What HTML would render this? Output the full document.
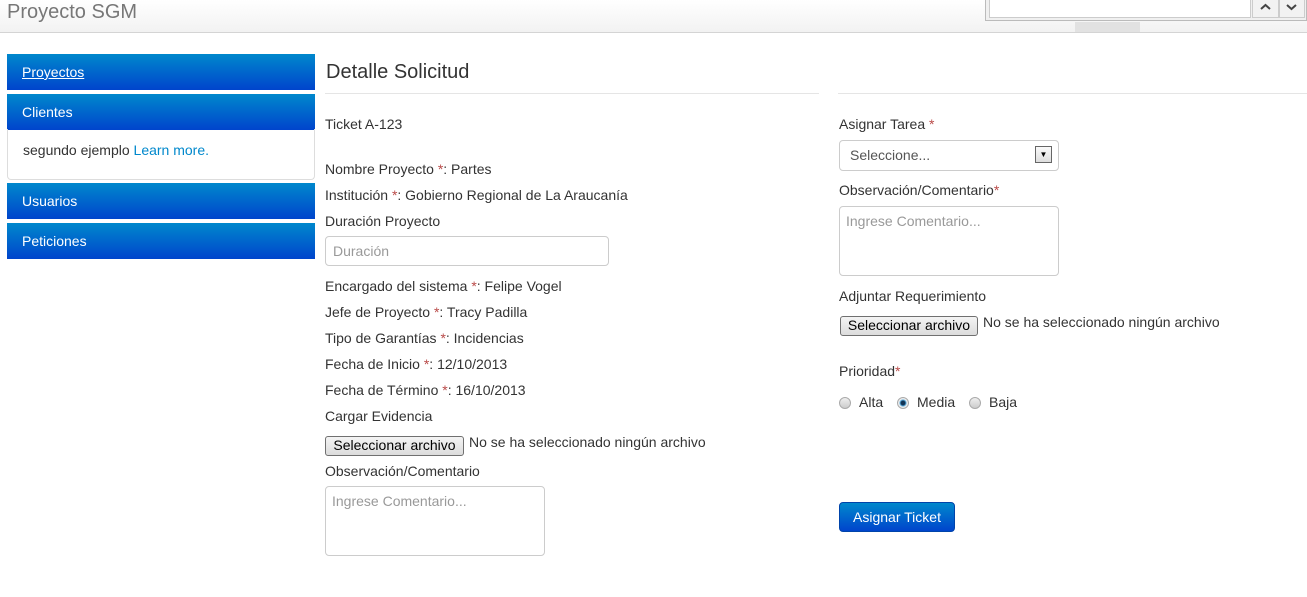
<!DOCTYPE html>
<html><head><meta charset="utf-8"><style>
*{box-sizing:border-box}
body{margin:0;width:1307px;height:597px;overflow:hidden;background:#fff;font-family:"Liberation Sans",Arial,sans-serif;font-size:14px;color:#333;position:relative}
.a{position:absolute;white-space:nowrap}
.hdr{position:absolute;left:0;top:0;width:1307px;height:33px;background:linear-gradient(#fff,#f2f2f2);border-bottom:1px solid #d4d4d4}
.nav{position:absolute;left:7px;width:308px;height:36px;background:linear-gradient(#0088cc,#0044cc);color:#fff;padding-left:15px;line-height:36px;font-size:14px}
.r{color:#b94a48}
.inp{position:absolute;border:1px solid #ccc;border-radius:4px;background:#fff;color:#999;font-size:14px}
.btn{position:absolute;border:1px solid #707070;border-radius:3px;background:linear-gradient(#f4f4f4,#dcdcdc);font-size:14px;color:#000;text-align:center;line-height:17px}
.rad{position:absolute;width:12px;height:12px;border-radius:50%;border:1px solid #aaa;background:linear-gradient(#eee,#ccc)}
</style></head><body>
<div class="hdr"></div>
<div class="a" style="left:7px;top:1px;font-size:20px;color:#777">Proyecto SGM</div>
<div class="a" style="left:985px;top:-4px;width:322px;height:25px;border:1px solid #bbb;background:#f0f0f0"></div>
<div class="a" style="left:989px;top:-4px;width:262px;height:22px;background:#fff;border:1px solid #ccc"></div>
<div class="a" style="left:1252px;top:-4px;width:27px;height:22px;border:1px solid #ccc;background:#f2f2f2"><svg width="25" height="20"><path d="M8 12 L12.5 8 L17 12" stroke="#444" stroke-width="2" fill="none"/></svg></div>
<div class="a" style="left:1279px;top:-4px;width:26px;height:22px;border:1px solid #ccc;background:#f2f2f2"><svg width="24" height="20"><path d="M7 8 L11.5 12 L16 8" stroke="#444" stroke-width="2" fill="none"/></svg></div>
<div class="a" style="left:1075px;top:22px;width:65px;height:10px;background:#e2e2e2"></div>

<div class="nav" style="top:54px"><u>Proyectos</u></div>
<div class="nav" style="top:94px">Clientes</div>
<div class="a" style="left:7px;top:129px;width:308px;height:51px;border:1px solid #ddd;border-top:none;border-radius:0 0 4px 4px;padding:13px 15px;">segundo ejemplo <span style="color:#0088cc">Learn more.</span></div>
<div class="nav" style="top:183px">Usuarios</div>
<div class="nav" style="top:223px">Peticiones</div>

<div class="a" style="left:326px;top:61px;font-size:20px;color:#333">Detalle Solicitud</div>
<div class="a" style="left:325px;top:93px;width:494px;border-top:1px solid #e5e5e5"></div>
<div class="a" style="left:838px;top:93px;width:469px;border-top:1px solid #e5e5e5"></div>

<div class="a" style="left:325px;top:116px">Ticket A-123</div>
<div class="a" style="left:325px;top:161px">Nombre Proyecto <span class="r">*</span>: Partes</div>
<div class="a" style="left:325px;top:187px">Institución <span class="r">*</span>: Gobierno Regional de La Araucanía</div>
<div class="a" style="left:325px;top:213px">Duración Proyecto</div>
<div class="inp" style="left:325px;top:236px;width:284px;height:30px;padding:6px 7px">Duración</div>
<div class="a" style="left:325px;top:278px">Encargado del sistema <span class="r">*</span>: Felipe Vogel</div>
<div class="a" style="left:325px;top:304px">Jefe de Proyecto <span class="r">*</span>: Tracy Padilla</div>
<div class="a" style="left:325px;top:330px">Tipo de Garantías <span class="r">*</span>: Incidencias</div>
<div class="a" style="left:325px;top:356px">Fecha de Inicio <span class="r">*</span>: 12/10/2013</div>
<div class="a" style="left:325px;top:382px">Fecha de Término <span class="r">*</span>: 16/10/2013</div>
<div class="a" style="left:325px;top:408px">Cargar Evidencia</div>
<div class="btn" style="left:325px;top:436px;width:139px;height:20px">Seleccionar archivo</div>
<div class="a" style="left:469px;top:434px">No se ha seleccionado ningún archivo</div>
<div class="a" style="left:325px;top:463px">Observación/Comentario</div>
<div class="inp" style="left:325px;top:486px;width:220px;height:70px;padding:6px 6px">Ingrese Comentario...</div>

<div class="a" style="left:839px;top:116px">Asignar Tarea <span class="r">*</span></div>
<div class="inp" style="left:839px;top:140px;width:220px;height:31px;padding:6px 10px;color:#555">Seleccione...</div>
<div class="a" style="left:1035px;top:146px;width:17px;height:17px;border:1px solid #666;background:linear-gradient(#fafafa,#ddd);text-align:center;font-size:8px;line-height:15px;color:#000">&#9660;</div>
<div class="a" style="left:839px;top:182px">Observación/Comentario<span class="r">*</span></div>
<div class="inp" style="left:839px;top:206px;width:220px;height:70px;padding:6px 6px">Ingrese Comentario...</div>
<div class="a" style="left:839px;top:288px">Adjuntar Requerimiento</div>
<div class="btn" style="left:840px;top:316px;width:138px;height:20px">Seleccionar archivo</div>
<div class="a" style="left:983px;top:314px">No se ha seleccionado ningún archivo</div>
<div class="a" style="left:839px;top:363px">Prioridad<span class="r">*</span></div>
<div class="rad" style="left:839px;top:397px"></div><div class="a" style="left:859px;top:394px">Alta</div>
<div class="rad" style="left:897px;top:397px;background:radial-gradient(#135 0 2px,#5ad 3px,#eee 4px)"></div><div class="a" style="left:917px;top:394px">Media</div>
<div class="rad" style="left:969px;top:397px"></div><div class="a" style="left:989px;top:394px">Baja</div>
<div class="a" style="left:839px;top:502px;width:116px;height:30px;border-radius:4px;border:1px solid #0044aa;background:linear-gradient(#0088cc,#0044cc);color:#fff;text-align:center;line-height:28px">Asignar Ticket</div>
</body></html>
